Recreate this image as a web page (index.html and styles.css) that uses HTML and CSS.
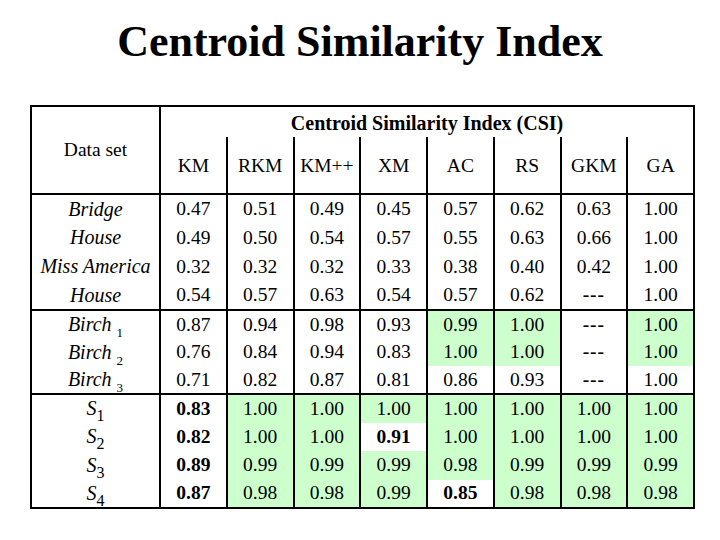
FILE: index.html
```html
<!DOCTYPE html>
<html>
<head>
<meta charset="utf-8">
<link rel="stylesheet" href="styles.css">
</head>
<body>
<h1 class="title">Centroid Similarity Index</h1>
<table class="csi">
  <colgroup>
    <col class="c-name">
    <col class="c-val"><col class="c-val"><col class="c-val"><col class="c-val">
    <col class="c-val"><col class="c-val"><col class="c-val"><col class="c-val">
  </colgroup>
  <thead>
    <tr class="h1">
      <th class="dataset" rowspan="2">Data set</th>
      <th class="group" colspan="8">Centroid Similarity Index (CSI)</th>
    </tr>
    <tr class="h2">
      <th>KM</th><th>RKM</th><th>KM++</th><th>XM</th><th>AC</th><th>RS</th><th>GKM</th><th>GA</th>
    </tr>
  </thead>
  <tbody class="g1">
    <tr><td class="name">Bridge</td><td>0.47</td><td>0.51</td><td>0.49</td><td>0.45</td><td>0.57</td><td>0.62</td><td>0.63</td><td>1.00</td></tr>
    <tr><td class="name">House</td><td>0.49</td><td>0.50</td><td>0.54</td><td>0.57</td><td>0.55</td><td>0.63</td><td>0.66</td><td>1.00</td></tr>
    <tr><td class="name">Miss America</td><td>0.32</td><td>0.32</td><td>0.32</td><td>0.33</td><td>0.38</td><td>0.40</td><td>0.42</td><td>1.00</td></tr>
    <tr><td class="name">House</td><td>0.54</td><td>0.57</td><td>0.63</td><td>0.54</td><td>0.57</td><td>0.62</td><td class="na">---</td><td>1.00</td></tr>
  </tbody>
  <tbody class="g2">
    <tr><td class="name">Birch <sub class="sb">1</sub></td><td>0.87</td><td>0.94</td><td>0.98</td><td>0.93</td><td class="ok">0.99</td><td class="ok">1.00</td><td class="na">---</td><td class="ok">1.00</td></tr>
    <tr><td class="name">Birch <sub class="sb">2</sub></td><td>0.76</td><td>0.84</td><td>0.94</td><td>0.83</td><td class="ok">1.00</td><td class="ok">1.00</td><td class="na">---</td><td class="ok">1.00</td></tr>
    <tr><td class="name">Birch <sub class="sb">3</sub></td><td>0.71</td><td>0.82</td><td>0.87</td><td>0.81</td><td>0.86</td><td>0.93</td><td class="na">---</td><td>1.00</td></tr>
  </tbody>
  <tbody class="g3">
    <tr><td class="name">S<sub class="ss">1</sub></td><td class="b">0.83</td><td class="ok">1.00</td><td class="ok">1.00</td><td class="ok">1.00</td><td class="ok">1.00</td><td class="ok">1.00</td><td class="ok">1.00</td><td class="ok">1.00</td></tr>
    <tr><td class="name">S<sub class="ss">2</sub></td><td class="b">0.82</td><td class="ok">1.00</td><td class="ok">1.00</td><td class="b">0.91</td><td class="ok">1.00</td><td class="ok">1.00</td><td class="ok">1.00</td><td class="ok">1.00</td></tr>
    <tr><td class="name">S<sub class="ss">3</sub></td><td class="b">0.89</td><td class="ok">0.99</td><td class="ok">0.99</td><td class="ok">0.99</td><td class="ok">0.98</td><td class="ok">0.99</td><td class="ok">0.99</td><td class="ok">0.99</td></tr>
    <tr><td class="name">S<sub class="ss">4</sub></td><td class="b">0.87</td><td class="ok">0.98</td><td class="ok">0.98</td><td class="ok">0.99</td><td class="b">0.85</td><td class="ok">0.98</td><td class="ok">0.98</td><td class="ok">0.98</td></tr>
  </tbody>
</table>
</body>
</html>
```

FILE: styles.css
```css
html, body {
  margin: 0;
  padding: 0;
  background: #ffffff;
  color: #000000;
  font-family: "Liberation Serif", "Times New Roman", serif;
}

.title {
  margin: 16px 0 0 0;
  font-size: 44px;
  font-weight: bold;
  line-height: 51px;
  text-align: center;
}

.csi {
  margin: 38px 0 0 30px;
  border-collapse: collapse;
  border: 2px solid #000;
  table-layout: fixed;
  width: 663px;
  font-size: 19.5px;
}

.c-name { width: 129px; }
.c-val { width: 66.75px; }

.csi th, .csi td {
  padding: 0;
  text-align: center;
  vertical-align: middle;
  font-weight: normal;
  white-space: nowrap;
}

.csi td, .csi .h2 th {
  border-left: 2px solid #000;
}

.csi .dataset {
  border-right: 2px solid #000;
  vertical-align: middle;
  padding-bottom: 0;
}

.h1 { height: 31px; }
.csi .group {
  font-weight: bold;
  font-size: 20px;
  padding-top: 2px;
}
.h2 { height: 57px; }
.csi .h2 th { padding-top: 2px; }

thead { border-bottom: 2px solid #000; }
tbody { border-top: 2px solid #000; }

.g1 tr { height: 29px; }
.g2 tr { height: 28px; }
.g3 tr { height: 28.5px; }

.csi .name {
  font-style: italic;
  font-size: 20px;
}

.sb {
  font-style: normal;
  font-size: 13px;
  vertical-align: -6px;
  line-height: 0;
}

.ss {
  font-style: normal;
  font-size: 16px;
  vertical-align: -6px;
  line-height: 0;
}

.csi .ok { background: #ccffcc; }
.csi .b { font-weight: bold; }
.csi .na { font-weight: bold; letter-spacing: 1px; }
```
